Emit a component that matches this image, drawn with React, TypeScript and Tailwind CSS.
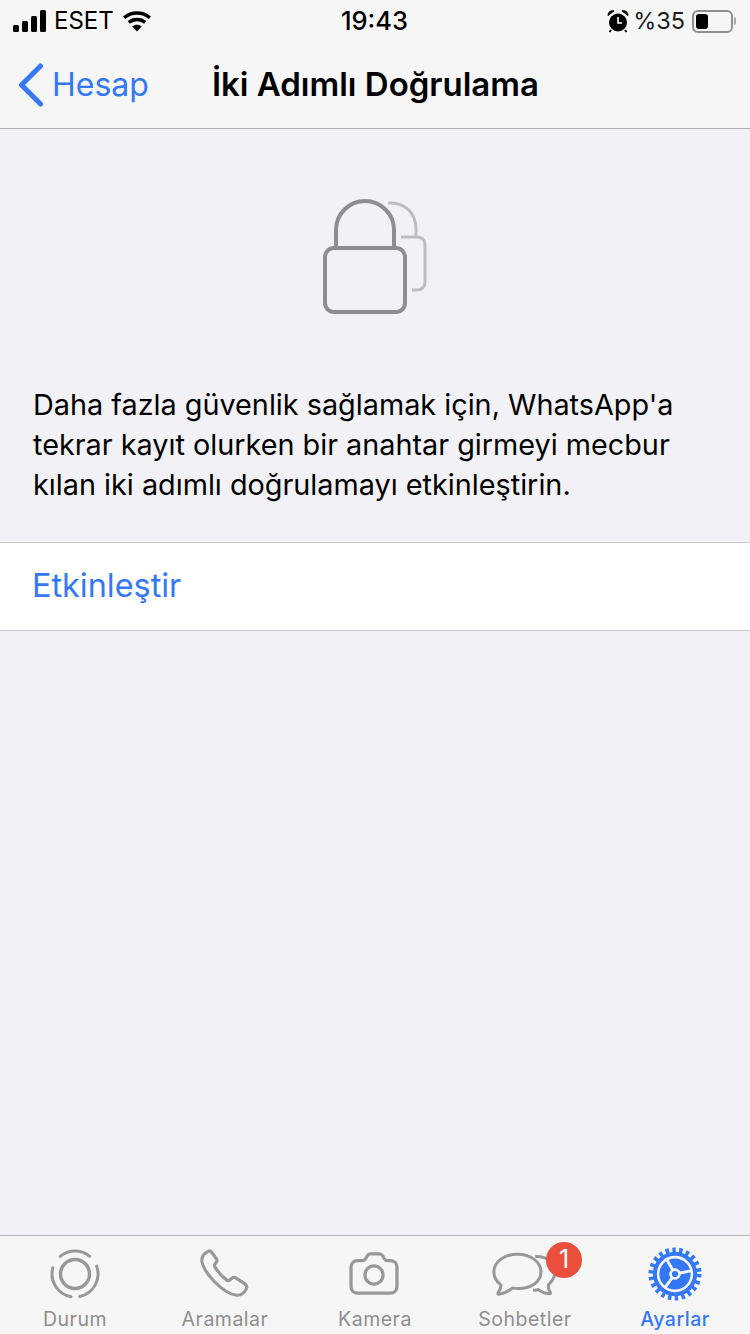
import { ReactNode } from "react";

const Signal = () => (
  <svg width="35" height="22" viewBox="0 0 35 22" fill="#000">
    <rect x="0" y="15" width="6" height="7" rx="1.5" />
    <rect x="9" y="11" width="6" height="11" rx="1.5" />
    <rect x="18" y="6" width="6" height="16" rx="1.5" />
    <rect x="27" y="0" width="6" height="22" rx="1.5" />
  </svg>
);

const Wifi = () => (
  <svg width="30" height="22" viewBox="0 0 32 24" fill="none" stroke="#000" strokeWidth="3.8">
    <path d="M2 8.5C9.8 1.5 22.2 1.5 30 8.5" />
    <path d="M7 13.5C12 9.2 20 9.2 25 13.5" />
    <path d="M16 23.5L10.8 18C13.6 15.6 18.4 15.6 21.2 18Z" fill="#000" stroke="none" />
  </svg>
);

const Alarm = () => (
  <svg width="22" height="24" viewBox="0 0 22 24" fill="none">
    <circle cx="11" cy="13.5" r="9" fill="#000" />
    <path d="M1 6.5C1 3 4 1 7 2ZM21 6.5C21 3 18 1 15 2Z" fill="#000" stroke="#000" strokeWidth="1" />
    <path d="M11 8V14H15" stroke="#fff" strokeWidth="1.6" />
    <path d="M4 21L2.5 23M18 21L19.5 23" stroke="#000" strokeWidth="2" />
  </svg>
);

const Battery = () => (
  <div className="flex items-center">
    <div className="flex h-[23px] w-[41px] items-center rounded-[6px] border-2 border-[#8f8f8f] p-[2px]">
      <div className="h-full w-[12px] rounded-[3px] bg-black" />
    </div>
    <div className="ml-[1px] h-[8px] w-[2px] rounded-r-full bg-[#a8a8a8]" />
  </div>
);

const LockArt = () => (
  <svg width="150" height="140" viewBox="0 0 150 140" fill="none" className="shrink-0">
    <path d="M88 18C105 17 116 28 116 44V52" stroke="#bdbdc1" strokeWidth="3" />
    <path d="M101 52H117C122 52 125 55 125 60V97C125 102 122 105 117 105H112" stroke="#bdbdc1" strokeWidth="3" />
    <path d="M36 62V45A29 29 0 0 1 94 45V62" stroke="#8e8e92" strokeWidth="4" />
    <rect x="25" y="63" width="80" height="64" rx="9" fill="#f1f1f6" stroke="#8e8e92" strokeWidth="4" />
  </svg>
);

const DurumIcon = () => (
  <svg width="50" height="50" viewBox="0 0 50 50" fill="none" stroke="#989898" strokeLinecap="round">
    <circle cx="25" cy="25" r="14.5" strokeWidth="3.4" />
    <path d="M10.2 7.4A23 23 0 0 1 39.8 7.4" strokeWidth="3" />
    <path d="M46.6 17.1A23 23 0 0 1 29.8 47.5" strokeWidth="3" />
    <path d="M21 47.65A23 23 0 0 1 2.9 18.7" strokeWidth="3" />
  </svg>
);

const PhoneIcon = () => (
  <svg width="50" height="50" viewBox="0 0 50 50" fill="none" stroke="#989898" strokeWidth="3.2" strokeLinejoin="round">
    <path d="M8 2.4C9.5 1.6 10.6 2 11.6 3.2L16.4 9.8C17.4 11.2 17 12.6 15.8 13.8C14.4 15.2 14.2 16.8 15.2 18.4C17.6 22.6 21.6 27 26 30.6C27.6 31.8 29.2 31.8 30.6 30.4C32.4 28.6 33.8 27.8 35.8 28.8L44.6 34.6C47 36.2 47.2 38.4 46 40.4C44.2 44 40.6 46.6 36.4 46.2C28.6 45.4 20.6 39 13.8 32C8.2 26 2.8 18.8 1.9 12.4C1.4 8 4 4.4 8 2.4Z" />
  </svg>
);

const CameraIcon = () => (
  <svg width="50" height="44" viewBox="0 0 52 46" fill="none" stroke="#989898" strokeWidth="3.4" strokeLinejoin="round" className="mr-[2px]">
    <path d="M9 9H14C15.5 9 16.5 8.2 17.2 7L18.8 4.2C19.6 2.8 20.8 2 22.4 2H31.6C33.2 2 34.4 2.8 35.2 4.2L36.8 7C37.5 8.2 38.5 9 40 9H43C47 9 50 12 50 16V36C50 40.5 47 43 43 43H9C5 43 2 40.5 2 36V16C2 12 5 9 9 9Z" />
    <circle cx="26" cy="24" r="9.5" />
  </svg>
);

const ChatIcon = () => (
  <svg width="64" height="46" viewBox="0 0 68 48" fill="none" stroke="#989898" strokeWidth="3.2" strokeLinejoin="round" className="mr-[3px]">
    <path d="M46 5.5C58 5 67 12 67 22C67 28 63.5 32 60 35.5C59.5 38 60.5 41 62 43.5C62.6 44.5 62 45.2 61 45C57 44.5 53 43.5 49.5 40.5C47.5 41.2 45 41.2 43.5 41" />
    <path d="M27 3C40.5 3 52 10.5 52 22C52 33 40.5 39.5 28 39.5C25.5 39.5 23.5 39.3 21.5 39C17.5 42.5 13 44.5 7.5 45.5C6.2 45.7 5.8 44.8 6.5 43.8C8.2 41.5 9.3 38.8 9.6 35.8C5 32.5 2 28 2 22C2 10.5 13.5 3 27 3Z" fill="#f6f6f6" />
  </svg>
);

const GearIcon = () => (
  <svg width="54" height="54" viewBox="0 0 56 56" fill="none">
    <circle cx="28" cy="28" r="24.5" stroke="#3478f6" strokeWidth="6" strokeDasharray="3.5 3.5" />
    <circle cx="28" cy="28" r="23" fill="#3478f6" />
    <circle cx="28" cy="28" r="17.5" stroke="#f6f6f6" strokeWidth="2.6" />
    <path d="M28 28L18.5 11.5M28 28L45.5 24.5M28 28L17 43" stroke="#f6f6f6" strokeWidth="3" />
    <circle cx="28" cy="28" r="6" fill="#f6f6f6" />
    <circle cx="28" cy="28" r="3.2" fill="#3478f6" />
  </svg>
);

const tabs: { label: string; icon: ReactNode; active?: boolean; badge?: string }[] = [
  { label: "Durum", icon: <DurumIcon /> },
  { label: "Aramalar", icon: <PhoneIcon /> },
  { label: "Kamera", icon: <CameraIcon /> },
  { label: "Sohbetler", icon: <ChatIcon />, badge: "1" },
  { label: "Ayarlar", icon: <GearIcon />, active: true },
];

export default function App() {
  return (
    <div className="flex h-[1334px] w-[750px] flex-col overflow-hidden bg-[#f1f1f6] font-['Inter',sans-serif] text-black">
      {/* Status + nav */}
      <header className="h-[129px] shrink-0 border-b border-[#b1b1b4] bg-[#f6f6f6]">
        <div className="flex h-[42px] items-center justify-between pl-[13px] pr-[14px] text-[24px]">
          <div className="flex flex-1 items-center gap-[6px]">
            <Signal />
            <span className="font-normal">ESET</span>
            <span className="ml-[2px]"><Wifi /></span>
          </div>
          <span className="text-[25.5px] font-medium">19:43</span>
          <div className="flex flex-1 items-center justify-end gap-[7px]">
            <span className="mr-[-3px]"><Alarm /></span>
            <span className="text-[23.5px] text-[#1c1c1c]">%35</span>
            <Battery />
          </div>
        </div>
        <div className="flex h-[86px] items-center pl-[18px]">
          <svg width="26" height="44" viewBox="0 0 26 44" fill="none" stroke="#3478f6" strokeWidth="5" strokeLinecap="round" strokeLinejoin="round">
            <path d="M22.5 3L3.5 22L22.5 41" />
          </svg>
          <span className="ml-[8px] text-[32px] text-[#3478f6]">Hesap</span>
          <span className="ml-[63px] text-[33px] font-semibold">İki Adımlı Doğrulama</span>
        </div>
      </header>

      <main className="flex flex-1 flex-col">
        <div className="mt-[56px] flex justify-center">
          <LockArt />
        </div>
        <p className="mt-[60px] px-[33px] text-[28.8px] leading-[40px]">
          Daha fazla güvenlik sağlamak için, WhatsApp'a
          <br />
          tekrar kayıt olurken bir anahtar girmeyi mecbur
          <br />
          kılan iki adımlı doğrulamayı etkinleştirin.
        </p>
        <div className="mt-[37px] flex h-[89px] items-center border-y border-[#c8c8cb] bg-white px-[32px] text-[32.4px] text-[#3478f6]">
          Etkinleştir
        </div>
      </main>

      {/* Tab bar */}
      <nav className="grid h-[99px] shrink-0 grid-cols-5 border-t border-[#b1b1b4] bg-[#f6f6f6]">
        {tabs.map((tab) => (
          <div key={tab.label} className="relative flex flex-col items-center">
            <div className="mt-[10px] flex h-[56px] items-center justify-center">{tab.icon}</div>
            <span className={`mt-[5px] text-[19.5px] leading-[24px] tracking-[0.5px] ${tab.active ? "font-medium text-[#3478f6]" : "font-normal text-[#8e8e8e]"}`}>
              {tab.label}
            </span>
            {tab.badge && (
              <span className="absolute left-[96px] top-[6px] flex h-[36px] w-[36px] items-center justify-center rounded-full bg-[#ea4f3d] text-[25px] text-white">
                {tab.badge}
              </span>
            )}
          </div>
        ))}
      </nav>
    </div>
  );
}
